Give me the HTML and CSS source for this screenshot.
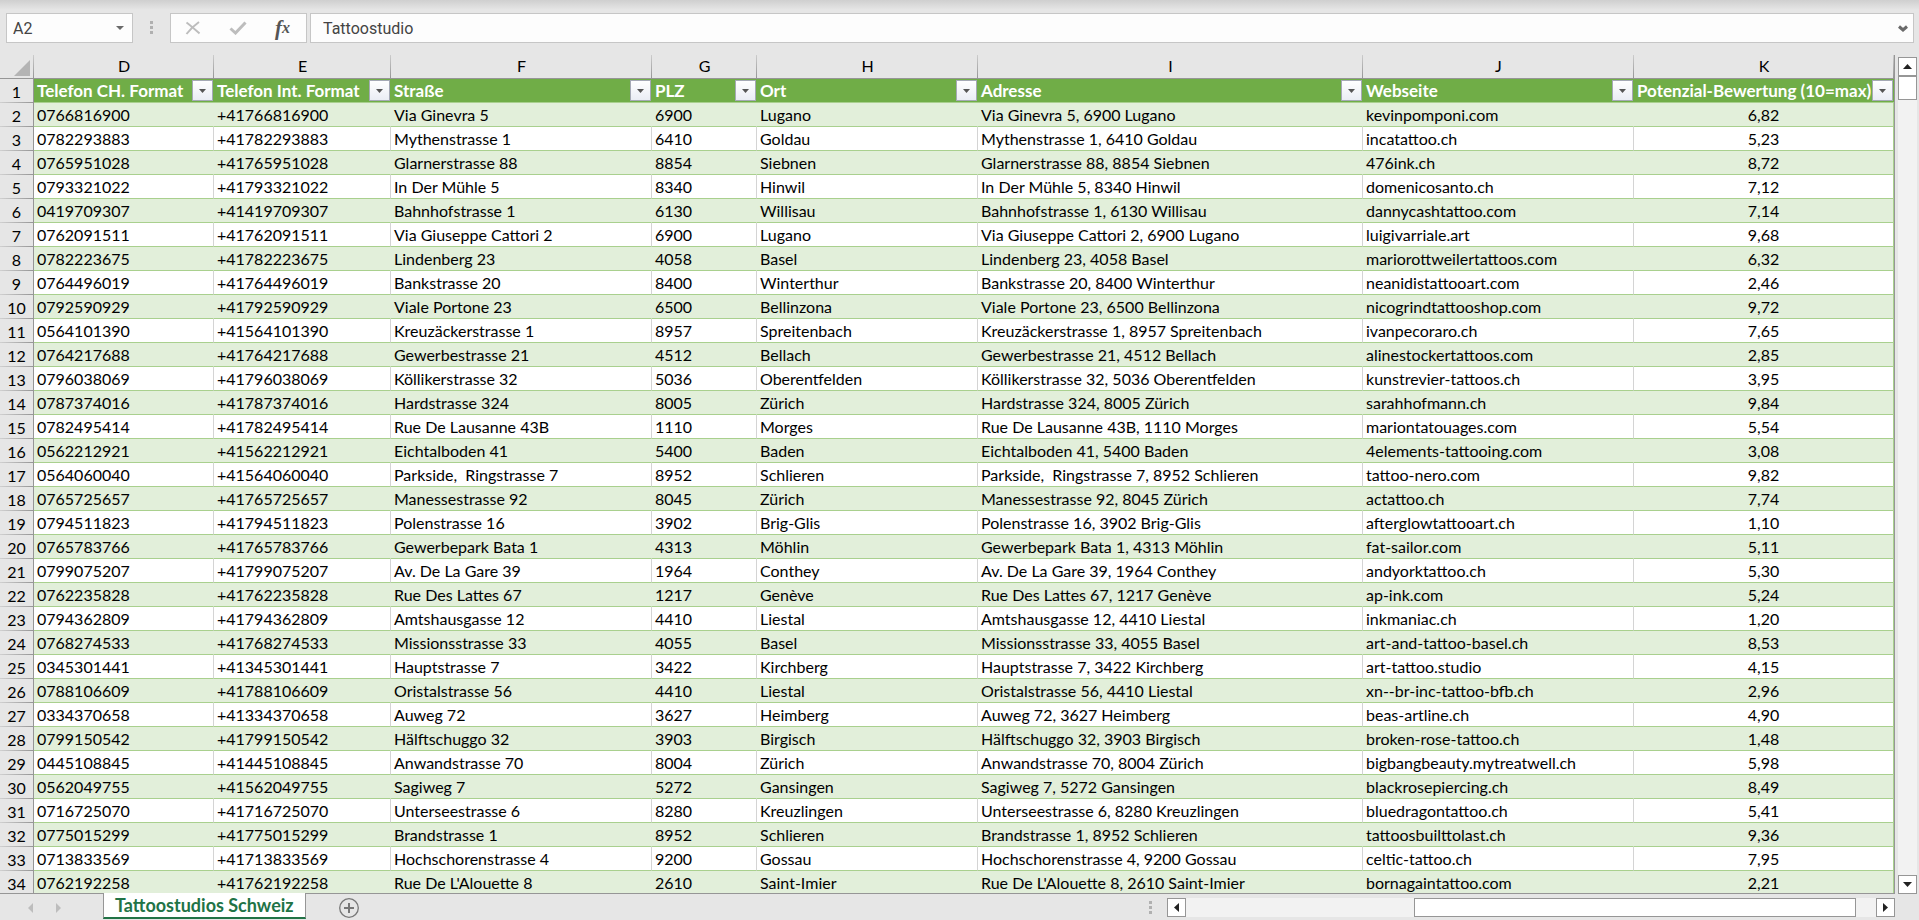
FILE: index.html
```html
<!DOCTYPE html>
<html lang="de">
<head>
<meta charset="utf-8">
<title>Tattoostudios Schweiz</title>
<link rel="stylesheet" href="styles.css">
</head>
<body>
<div class="app">
  <header class="formula-bar">
    <div class="name-box">
      <input class="name-input" type="text" value="A2" aria-label="Namenfeld">
      <button class="plain-button name-toggle" type="button" aria-label="Namen anzeigen">
        <svg width="8" height="4" viewBox="0 0 8 4"><path d="M0 0h8L4 4z" fill="#6a6a6a"/></svg>
      </button>
    </div>
    <span class="grip"><i></i><i></i><i></i></span>
    <div class="edit-tools">
      <button class="plain-button" type="button" aria-label="Abbrechen">
        <svg width="16" height="14" viewBox="0 0 16 14"><path d="M1.500 1.500C5 4 10 8.500 14.500 12.500M14 1C9 4.500 5 8.500 1.500 13" fill="none" stroke="#bdbdbd" stroke-width="2"/></svg>
      </button>
      <button class="plain-button" type="button" aria-label="Eingeben">
        <svg width="18" height="14" viewBox="0 0 18 14"><path d="M1.500 7.500l5 4.500L16.500 1.500" fill="none" stroke="#bdbdbd" stroke-width="3"/></svg>
      </button>
      <button class="plain-button fx" type="button" aria-label="Funktion einfügen"><span class="fx-f">f</span><span class="fx-x">x</span></button>
    </div>
    <div class="formula-box">
      <input class="formula-input" type="text" value="Tattoostudio" aria-label="Bearbeitungsleiste">
      <button class="plain-button" type="button" aria-label="Bearbeitungsleiste erweitern">
        <svg width="10" height="7" viewBox="0 0 10 7"><path d="M1 1.500l4 3.500 4-3.500" fill="none" stroke="#6a6a6a" stroke-width="3"/></svg>
      </button>
    </div>
  </header>

  <main class="workspace">
    <div class="grid-view">
      <table class="sheet">
        <colgroup>
          <col class="col-index"><col class="col-d"><col class="col-e"><col class="col-f"><col class="col-g"><col class="col-h"><col class="col-i"><col class="col-j"><col class="col-k">
        </colgroup>
        <thead>
          <tr class="letters">
            <th class="corner"><svg width="16" height="16" viewBox="0 0 16 16"><path d="M16 0v16H0z" fill="#b4b4b4"/></svg></th>
            <th>D</th><th>E</th><th>F</th><th>G</th><th>H</th><th>I</th><th>J</th><th>K</th>
          </tr>
          <tr class="titles" id="titles"><th class="row-number">1</th></tr>
        </thead>
        <tbody id="rows"></tbody>
      </table>
    </div>
    <div class="v-scroll">
      <button class="scroll-button" type="button" aria-label="Nach oben"><svg width="9" height="5" viewBox="0 0 9 5"><path d="M0 5h9L4.500 0z" fill="#222"/></svg></button>
      <div class="v-thumb"></div>
      <button class="scroll-button scroll-end" type="button" aria-label="Nach unten"><svg width="9" height="5" viewBox="0 0 9 5"><path d="M0 0h9L4.500 5z" fill="#222"/></svg></button>
    </div>
  </main>

  <footer class="sheet-bar">
    <nav class="sheet-nav">
      <button class="plain-button" type="button" aria-label="Vorheriges Blatt"><svg width="5" height="10" viewBox="0 0 5 10"><path d="M5 0v10L0 5z" fill="#bdbdbd"/></svg></button>
      <button class="plain-button" type="button" aria-label="Nächstes Blatt"><svg width="5" height="10" viewBox="0 0 5 10"><path d="M0 0v10l5-5z" fill="#bdbdbd"/></svg></button>
    </nav>
    <button class="sheet-tab" type="button">Tattoostudios Schweiz</button>
    <button class="plain-button add-sheet" type="button" aria-label="Neues Blatt">
      <svg width="20" height="20" viewBox="0 0 20 20" fill="none" stroke="#777"><circle cx="10" cy="10" r="9.300" stroke-width="1.300"/><path d="M10 5v10M5 10h10" stroke-width="2"/></svg>
    </button>
    <span class="grip"><i></i><i></i><i></i></span>
    <div class="h-scroll">
      <button class="scroll-button" type="button" aria-label="Nach links"><svg width="5" height="9" viewBox="0 0 5 9"><path d="M5 0v9L0 4.500z" fill="#222"/></svg></button>
      <div class="h-track"><div class="h-thumb"></div></div>
      <button class="scroll-button" type="button" aria-label="Nach rechts"><svg width="5" height="9" viewBox="0 0 5 9"><path d="M0 0v9l5-4.500z" fill="#222"/></svg></button>
    </div>
  </footer>
</div>
<script src="sheet.js"></script>
</body>
</html>
```

FILE: styles.css
```css
* { box-sizing: border-box; }

body {
  margin: 0;
  background: #e6e6e6;
  color: #000;
  font-family: Lato, "Liberation Sans", sans-serif;
  font-size: 16px;
}

button, input { font: inherit; color: inherit; }

svg { display: block; }

.app {
  display: flex;
  flex-direction: column;
  height: 100vh;
  overflow: hidden;
}

.plain-button {
  display: flex;
  align-items: center;
  justify-content: center;
  padding: 0;
  border: 0;
  background: none;
}

/* Formula bar */
.formula-bar {
  display: flex;
  align-items: flex-start;
  padding: 13px 5px 12px 6px;
  background: linear-gradient(#cfcfcf, #e6e6e6 10px);
  color: #444;
  font-family: Roboto, "Liberation Sans", sans-serif;
}

.name-box, .edit-tools, .formula-box {
  display: flex;
  align-items: center;
  height: 30px;
  border: 1px solid #c6c6c6;
  background: #fdfdfd;
}

.name-box { width: 127px; }

.name-input, .formula-input {
  flex: 1;
  min-width: 0;
  border: 0;
  padding: 0;
  background: none;
  outline: 0;
}

.name-input { padding-left: 6px; }
.name-toggle { width: 24px; height: 28px; }

.grip {
  display: flex;
  flex-direction: column;
  gap: 2px;
}

.grip i { width: 3px; height: 3px; background: #b0b0b0; }

.formula-bar .grip { margin: 8px 17px; }

.edit-tools {
  justify-content: space-between;
  width: 137px;
  margin-right: 3px;
  padding: 0 16px 0 14px;
}

.fx {
  color: #555;
  font-family: "Liberation Serif", serif;
  font-style: italic;
  font-weight: 700;
}

.fx-f { font-size: 21px; line-height: 24px; }
.fx-x { font-size: 16px; line-height: 24px; }

.formula-box { flex: 1; padding: 0 5px 0 12px; }

/* Cell grid */
.workspace {
  display: flex;
  flex: 1;
  gap: 3px;
  min-height: 0;
}

.grid-view {
  flex: 1;
  min-width: 0;
  overflow: hidden;
  border-right: 1px solid #969696;
  border-bottom: 1px solid #969696;
}

.sheet {
  width: 100%;
  table-layout: fixed;
  border-collapse: separate;
  border-spacing: 0;
  line-height: 20px;
}

.col-index { width: 34px; }
.col-d { width: 180px; }
.col-e { width: 177px; }
.col-f { width: 261px; }
.col-g { width: 105px; }
.col-h { width: 221px; }
.col-i { width: 385px; }
.col-j { width: 271px; }
.col-k { width: 260px; }

.sheet th, .sheet td {
  height: 24px;
  padding: 2px 0 1px 3px;
  overflow: hidden;
  text-align: left;
  white-space: pre;
}

.sheet .letters th {
  padding: 1px 0 2px;
  border-bottom: 1px solid #969696;
  background: linear-gradient(#cccccc, #969696) right / 1px 100% no-repeat;
  font-weight: 400;
  text-align: center;
}

.sheet .letters .corner { padding: 2px 0 0 14px; }

.sheet .row-number {
  padding: 2px 0 1px;
  border-right: 1px solid #969696;
  background: linear-gradient(90deg, #d0d0d0, #969696) bottom / 100% 1px no-repeat #e6e6e6;
  font-weight: 400;
  text-align: center;
}

.titles th {
  border-bottom: 1px solid #a9d08e;
  background: #70ad47;
  color: #fff;
  font-weight: 700;
}

.titles .row-number { border-bottom: 0; color: #000; }

.title-cell {
  display: flex;
  align-items: center;
  justify-content: space-between;
  height: 21px;
  padding-right: 1px;
  font-size: 17px;
}

.filter-button {
  display: flex;
  flex: none;
  align-items: center;
  justify-content: center;
  width: 21px;
  height: 21px;
  padding: 0;
  border: 1px solid #a5a9b5;
  background: linear-gradient(#ffffff, #eaedf4);
}

.sheet .title { padding: 1px 0 1px 3px; }

.sheet td {
  border-right: 1px solid #d4d4d4;
  border-bottom: 1px solid #a9d08e;
  background: #fff;
}

.sheet tr:nth-child(odd) td { border-right-color: #e2efda; background: #e2efda; }

.sheet tr:nth-child(n) .rating {
  border-right-color: #a9d08e;
  padding-left: 0;
  text-align: center;
}

/* Scroll bars */
.v-scroll {
  display: flex;
  flex-direction: column;
  width: 19px;
  margin: 2px 2px 0 0;
  background: #f2f2f2;
}

.scroll-button {
  display: flex;
  flex: none;
  align-items: center;
  justify-content: center;
  width: 19px;
  height: 19px;
  padding: 0;
  border: 1px solid #969696;
  background: #fff;
}

.v-thumb {
  height: 24px;
  border: 1px solid #969696;
  background: #fff;
}

.scroll-end { margin-top: auto; }

/* Sheet tabs */
.sheet-bar {
  display: flex;
  align-items: flex-start;
  height: 26px;
  padding-right: 24px;
}

.sheet-nav {
  display: flex;
  gap: 23px;
  width: 103px;
  padding: 9px 0 0 28px;
}

.sheet-tab {
  height: 26px;
  margin-top: -1px;
  padding: 0 11px;
  border: solid #969696;
  border-width: 0 1px;
  border-bottom: 2px solid #217346;
  background: #fff;
  color: #217346;
  font-size: 18px;
  font-weight: 700;
  line-height: 22px;
  z-index: 1;
}

.add-sheet { margin: 4px auto 0 33px; }

.sheet-bar .grip { margin: 7px 15px 0 0; }

.h-scroll {
  display: flex;
  width: 728px;
  padding-top: 4px;
}

.h-track {
  flex: 1;
  height: 19px;
  padding: 0 20px 0 228px;
  background: #f2f2f2;
}

.h-thumb {
  height: 19px;
  border: 1px solid #969696;
  background: #fff;
}
```

FILE: sheet.js
```js
const titles = ["Telefon CH. Format", "Telefon Int. Format", "Straße", "PLZ", "Ort", "Adresse", "Webseite", "Potenzial-Bewertung (10=max)"];

// phone, street, postcode, town, website, rating
const studios = [
  ["0766816900", "Via Ginevra 5", "6900", "Lugano", "kevinpomponi.com", "6,82"],
  ["0782293883", "Mythenstrasse 1", "6410", "Goldau", "incatattoo.ch", "5,23"],
  ["0765951028", "Glarnerstrasse 88", "8854", "Siebnen", "476ink.ch", "8,72"],
  ["0793321022", "In Der Mühle 5", "8340", "Hinwil", "domenicosanto.ch", "7,12"],
  ["0419709307", "Bahnhofstrasse 1", "6130", "Willisau", "dannycashtattoo.com", "7,14"],
  ["0762091511", "Via Giuseppe Cattori 2", "6900", "Lugano", "luigivarriale.art", "9,68"],
  ["0782223675", "Lindenberg 23", "4058", "Basel", "mariorottweilertattoos.com", "6,32"],
  ["0764496019", "Bankstrasse 20", "8400", "Winterthur", "neanidistattooart.com", "2,46"],
  ["0792590929", "Viale Portone 23", "6500", "Bellinzona", "nicogrindtattooshop.com", "9,72"],
  ["0564101390", "Kreuzäckerstrasse 1", "8957", "Spreitenbach", "ivanpecoraro.ch", "7,65"],
  ["0764217688", "Gewerbestrasse 21", "4512", "Bellach", "alinestockertattoos.com", "2,85"],
  ["0796038069", "Köllikerstrasse 32", "5036", "Oberentfelden", "kunstrevier-tattoos.ch", "3,95"],
  ["0787374016", "Hardstrasse 324", "8005", "Zürich", "sarahhofmann.ch", "9,84"],
  ["0782495414", "Rue De Lausanne 43B", "1110", "Morges", "mariontatouages.com", "5,54"],
  ["0562212921", "Eichtalboden 41", "5400", "Baden", "4elements-tattooing.com", "3,08"],
  ["0564060040", "Parkside,  Ringstrasse 7", "8952", "Schlieren", "tattoo-nero.com", "9,82"],
  ["0765725657", "Manessestrasse 92", "8045", "Zürich", "actattoo.ch", "7,74"],
  ["0794511823", "Polenstrasse 16", "3902", "Brig-Glis", "afterglowtattooart.ch", "1,10"],
  ["0765783766", "Gewerbepark Bata 1", "4313", "Möhlin", "fat-sailor.com", "5,11"],
  ["0799075207", "Av. De La Gare 39", "1964", "Conthey", "andyorktattoo.ch", "5,30"],
  ["0762235828", "Rue Des Lattes 67", "1217", "Genève", "ap-ink.com", "5,24"],
  ["0794362809", "Amtshausgasse 12", "4410", "Liestal", "inkmaniac.ch", "1,20"],
  ["0768274533", "Missionsstrasse 33", "4055", "Basel", "art-and-tattoo-basel.ch", "8,53"],
  ["0345301441", "Hauptstrasse 7", "3422", "Kirchberg", "art-tattoo.studio", "4,15"],
  ["0788106609", "Oristalstrasse 56", "4410", "Liestal", "xn--br-inc-tattoo-bfb.ch", "2,96"],
  ["0334370658", "Auweg 72", "3627", "Heimberg", "beas-artline.ch", "4,90"],
  ["0799150542", "Hälftschuggo 32", "3903", "Birgisch", "broken-rose-tattoo.ch", "1,48"],
  ["0445108845", "Anwandstrasse 70", "8004", "Zürich", "bigbangbeauty.mytreatwell.ch", "5,98"],
  ["0562049755", "Sagiweg 7", "5272", "Gansingen", "blackrosepiercing.ch", "8,49"],
  ["0716725070", "Unterseestrasse 6", "8280", "Kreuzlingen", "bluedragontattoo.ch", "5,41"],
  ["0775015299", "Brandstrasse 1", "8952", "Schlieren", "tattoosbuilttolast.ch", "9,36"],
  ["0713833569", "Hochschorenstrasse 4", "9200", "Gossau", "celtic-tattoo.ch", "7,95"],
  ["0762192258", "Rue De L'Alouette 8", "2610", "Saint-Imier", "bornagaintattoo.com", "2,21"]
];

const arrow = '<svg width="7" height="4" viewBox="0 0 7 4"><path d="M0 0h7L3.500 4z" fill="#555"/></svg>';

document.getElementById("titles").insertAdjacentHTML("beforeend", titles.map(title =>
  `<th class="title"><div class="title-cell"><span>${title}</span><button class="filter-button" type="button" aria-label="${title} filtern">${arrow}</button></div></th>`
).join(""));

document.getElementById("rows").innerHTML = studios.map(([phone, street, postcode, town, site, rating], i) => {
  const cells = [phone, "+41" + phone.slice(1), street, postcode, town, `${street}, ${postcode} ${town}`, site];
  return `<tr><th class="row-number">${i + 2}</th>${cells.map(text => `<td>${text}</td>`).join("")}<td class="rating">${rating}</td></tr>`;
}).join("");
```
